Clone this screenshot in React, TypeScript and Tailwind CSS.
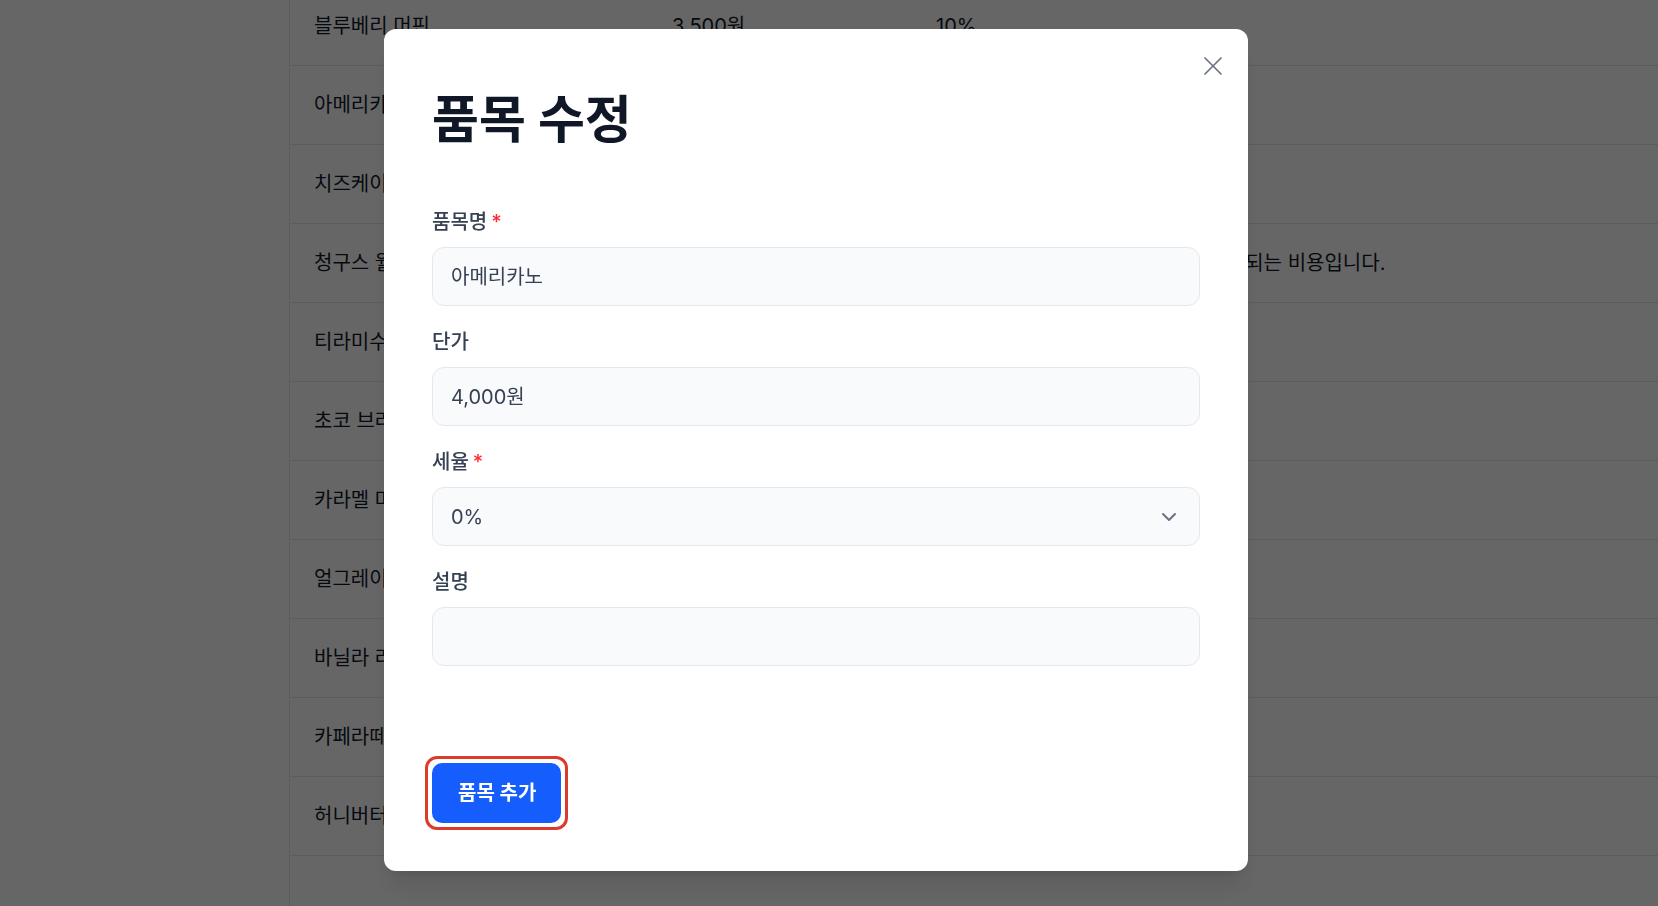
import React from 'react';
import { ChevronDown } from 'lucide-react';

const rows = [
  { name: '블루베리 머핀', price: '3,500원', tax: '10%', desc: '' },
  { name: '아메리카노', price: '4,000원', tax: '0%', desc: '' },
  { name: '치즈케이크', price: '5,500원', tax: '10%', desc: '' },
  { name: '청구스 월간 구독', price: '9,900원', tax: '10%', desc: '매월 청구되는 비용입니다.' },
  { name: '티라미수', price: '6,000원', tax: '10%', desc: '' },
  { name: '초코 브라우니', price: '4,500원', tax: '10%', desc: '' },
  { name: '카라멜 마키아토', price: '5,000원', tax: '0%', desc: '' },
  { name: '얼그레이 티', price: '4,500원', tax: '0%', desc: '' },
  { name: '바닐라 라떼', price: '5,000원', tax: '0%', desc: '' },
  { name: '카페라떼', price: '4,500원', tax: '0%', desc: '' },
  { name: '허니버터 브레드', price: '5,500원', tax: '10%', desc: '' },
];

const Label = ({ text, required }: { text: string; required?: boolean }) => (
  <label className="mb-[11px] block text-xl font-medium leading-7 text-gray-700">
    {text}
    {required && <span className="ml-1 text-red-500">*</span>}
  </label>
);

export default function App() {
  return (
    <div className="relative h-screen overflow-hidden bg-white font-['Inter','Noto_Sans_CJK_KR',sans-serif]">
      {/* page behind the dialog */}
      <div className="flex h-full">
        <aside className="w-[290px] shrink-0 border-r border-gray-200" />
        <main className="flex-1">
          <div className="-mt-[13px]">
            {rows.map((r) => (
              <div
                key={r.name}
                className="grid h-[79px] grid-cols-[358px_264px_230px_1fr] items-center border-b border-gray-200 px-6 text-xl text-gray-900"
              >
                <span>{r.name}</span>
                <span>{r.price}</span>
                <span>{r.tax}</span>
                <span>{r.desc}</span>
              </div>
            ))}
          </div>
        </main>
      </div>

      {/* overlay */}
      <div className="fixed inset-0 bg-black/60">
        <div className="relative ml-[384px] mt-[29px] flex h-[842px] w-[864px] flex-col rounded-xl bg-white p-12 shadow-xl">
          <button className="absolute right-[26px] top-[28px] text-gray-500">
            <svg width="18" height="18" viewBox="0 0 18 18" fill="none" stroke="currentColor" strokeWidth="1.7" strokeLinecap="round">
              <path d="M1 1 17 17M17 1 1 17" />
            </svg>
          </button>

          <h2 className="mt-[19px] text-[51px] font-bold leading-[48px] text-gray-900">품목 수정</h2>

          <div className="mt-[64px] flex flex-col gap-[22px]">
            <div>
              <Label text="품목명" required />
              <div className="flex h-[59px] items-center rounded-xl border border-gray-200 bg-gray-50 px-[18px] text-xl text-gray-700">
                아메리카노
              </div>
            </div>
            <div>
              <Label text="단가" />
              <div className="flex h-[59px] items-center rounded-xl border border-gray-200 bg-gray-50 px-[18px] text-xl text-gray-700">
                4,000원
              </div>
            </div>
            <div>
              <Label text="세율" required />
              <div className="flex h-[59px] items-center justify-between rounded-xl border border-gray-200 bg-gray-50 px-[18px] text-xl text-gray-700">
                <span>0%</span>
                <ChevronDown size={24} className="text-gray-500" />
              </div>
            </div>
            <div>
              <Label text="설명" />
              <div className="h-[59px] rounded-xl border border-gray-200 bg-gray-50" />
            </div>
          </div>

          <div className="-m-[7px] mt-auto self-start rounded-[12px] border-[3px] border-[#dc3b2b] p-1">
            <button className="h-[60px] rounded-[10px] bg-blue-600 pl-[26px] pr-[25px] text-xl font-bold leading-7 text-white">
              품목 추가
            </button>
          </div>
        </div>
      </div>
    </div>
  );
}
